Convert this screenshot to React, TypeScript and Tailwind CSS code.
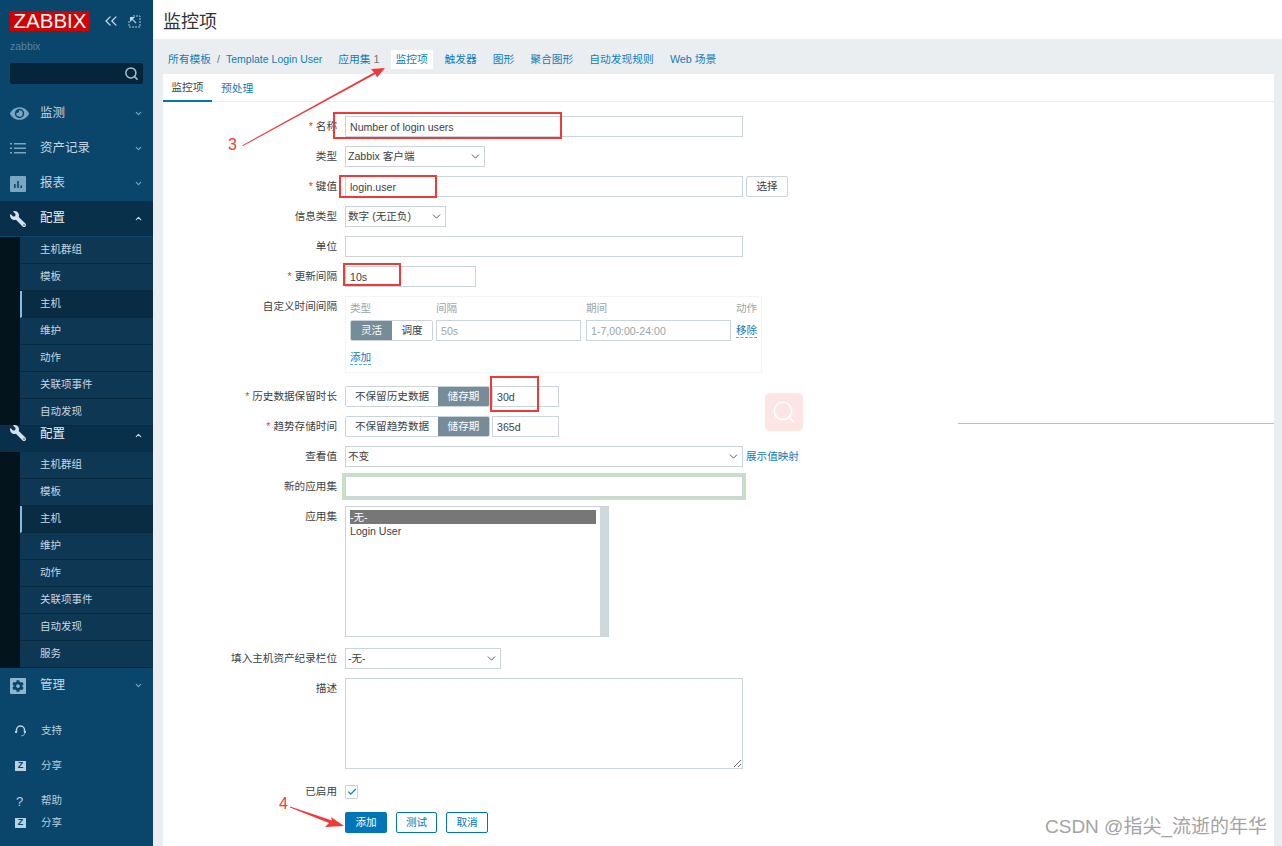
import { ReactNode } from "react";
import { ChevronDown, ChevronUp, ChevronsLeft, Check, Search } from "lucide-react";
import { FaEye, FaWrench, FaCog } from "react-icons/fa";

const FONT = "font-['Liberation_Sans','Noto_Sans_CJK_SC',sans-serif]";

function NavItem({
  icon,
  label,
  open,
  active,
}: {
  icon: ReactNode;
  label: string;
  open?: boolean;
  active?: boolean;
}) {
  return (
    <div
      className={`flex h-[35px] items-center pl-[10px] pr-[10px] ${active ? "bg-[#08304a] text-[#e6eef3]" : "text-[#c4d6e1]"}`}
    >
      <div className="flex w-[30px] items-center">{icon}</div>
      <span className="flex-1 text-[12.5px]">{label}</span>
      {open ? (
        <ChevronUp size={9} strokeWidth={3} className="text-[#c4d6e1]" />
      ) : (
        <ChevronDown size={9} strokeWidth={3} className="text-[#7ea6bf]" />
      )}
    </div>
  );
}

function SubMenu({ items, className }: { items: string[]; className?: string }) {
  return (
    <div className={`flex bg-[#03141d] ${className ?? ""}`}>
      <div className="w-[20px]" />
      <div className="flex-1">
        {items.map((item) => {
          const active = item === "主机";
          return (
            <div
              key={item}
              className={`flex h-[27px] items-center border-b border-[#072a40] text-[10.5px] text-[#c8d8e2] ${active ? "border-l-2 border-l-[#7dbfe8] bg-[#0a2c43] pl-[18px]" : "bg-[#0e3754] pl-[20px]"}`}
            >
              {item}
            </div>
          );
        })}
      </div>
    </div>
  );
}

function ZBadge() {
  return (
    <div className="flex h-[10px] w-[11px] items-center justify-center bg-[#b9d2e0] text-[9px] font-bold text-[#0a466b]">
      Z
    </div>
  );
}

function FootItem({ icon, label, className }: { icon: ReactNode; label: string; className: string }) {
  return (
    <div className={`flex items-center pl-[15px] text-[10.5px] text-[#b9cfdc] ${className}`}>
      <div className="flex w-[26px] items-center">{icon}</div>
      {label}
    </div>
  );
}

function Sidebar() {
  return (
    <aside className="flex w-[153px] flex-none flex-col bg-[#0a466b]">
      <div className="flex items-center pl-[10px] pt-[11px]">
        <div className="flex h-[20px] w-[80px] items-center justify-center bg-[#d40000] text-[20.5px] leading-none text-white">
          ZABBIX
        </div>
        <ChevronsLeft size={20} strokeWidth={1.5} className="ml-[11px] text-[#c9dbe6]" />
        <svg width="13" height="13" viewBox="0 0 13 13" fill="none" stroke="#a9c4d4" className="ml-[7px]">
          <path d="M5 1H12V12H1V5" strokeDasharray="2 1" />
          <path d="M2 2H7L2 7Z" fill="#c9dbe6" stroke="none" />
          <path d="M4 4L8 8" strokeWidth="1.3" />
        </svg>
      </div>
      <div className="mt-[8px] pl-[10px] text-[10.5px] leading-[14px] text-[#55859f]">zabbix</div>
      <div className="mx-[10px] mt-[10px] flex h-[21px] items-center justify-end rounded-[2px] border border-[#052235] bg-[#05263a] pr-[3px]">
        <Search size={15} strokeWidth={2.4} className="text-[#a9c1cf]" />
      </div>
      <nav className="mt-[12px]">
        <NavItem icon={<FaEye size={19} className="text-[#7aa6c0]" />} label="监测" />
        <NavItem
          icon={
            <svg width="17" height="11" viewBox="0 0 17 11" fill="#7aa6c0">
              <path d="M0 0h2v1.6H0zM4 0h12v1.6H4zM0 4.5h2v1.6H0zM4 4.5h12v1.6H4zM0 9h2v1.6H0zM4 9h12v1.6H4z" />
            </svg>
          }
          label="资产记录"
        />
        <NavItem
          icon={
            <svg width="16" height="16" viewBox="0 0 16 16">
              <rect width="16" height="16" rx="1" fill="#7aa6c0" />
              <path d="M4 8h1.6v4H4zM7.2 5h1.6v7H7.2zM10.4 9.5H12V12h-1.6z" fill="#0a466b" />
            </svg>
          }
          label="报表"
        />
        <NavItem
          icon={<FaWrench size={16} className="-scale-x-100 text-[#d3e2ec]" />}
          label="配置"
          open
          active
        />
        <SubMenu className="mt-[1px]" items={["主机群组", "模板", "主机", "维护", "动作", "关联项事件", "自动发现"]} />
        <div className="-mt-[1px] flex h-[27px] items-start overflow-hidden bg-[#08304a] pl-[10px] pr-[10px] text-[#e6eef3]">
          <div className="flex w-[30px] items-center">
            <FaWrench size={16} className="-scale-x-100 text-[#d3e2ec]" />
          </div>
          <span className="flex-1 text-[12.5px]">配置</span>
          <ChevronUp size={9} strokeWidth={3} className="mt-[6px] text-[#c4d6e1]" />
        </div>
        <SubMenu items={["主机群组", "模板", "主机", "维护", "动作", "关联项事件", "自动发现", "服务"]} />
        <NavItem
          icon={
            <div className="flex h-[16px] w-[16px] items-center justify-center rounded-[1px] bg-[#8fb6cd]">
              <FaCog size={12} className="text-[#0a466b]" />
            </div>
          }
          label="管理"
        />
      </nav>
      <div className="mt-[10px]">
        <FootItem
          className="h-[35px]"
          label="支持"
          icon={
            <svg width="11" height="12" viewBox="0 0 11 12" fill="none" stroke="#b9d2e0" strokeWidth="1.5">
              <path d="M1.5 7V5a4 4 0 018 0v2" />
              <path d="M1 6v2M10 6v2" strokeWidth="2" />
              <path d="M9.5 8.5c0 1.500-1.500 2.300-3 2.300" strokeWidth="1" />
            </svg>
          }
        />
        <FootItem className="h-[35px]" label="分享" icon={<ZBadge />} />
        <FootItem
          className="h-[22px] mt-[7px]"
          label="帮助"
          icon={<span className="pl-[1px] text-[13px] leading-none text-[#b9d2e0]">?</span>}
        />
        <FootItem className="h-[22px]" label="分享" icon={<ZBadge />} />
      </div>
    </aside>
  );
}

function Row({
  label,
  required,
  children,
  mb = "mb-[9px]",
  h = "h-[21px]",
}: {
  label: string;
  required?: boolean;
  children: ReactNode;
  mb?: string;
  h?: string;
}) {
  return (
    <div className={`flex items-start ${mb}`}>
      <div className={`flex w-[174px] flex-none items-center justify-end whitespace-nowrap text-[#3b4245] ${h}`}>
        {required && <span className="mr-[3px] text-[#e33734]">*</span>}
        {label}
      </div>
      <div className="ml-[8px] flex-1">{children}</div>
    </div>
  );
}

function Field({ value, w, placeholder }: { value?: string; w: string; placeholder?: string }) {
  return (
    <input
      readOnly
      value={value ?? ""}
      placeholder={placeholder}
      className={`block h-[21px] border border-[#cbd4d9] bg-white px-[4px] text-[#3b4245] outline-none placeholder:text-[#9aa5aa] ${w}`}
    />
  );
}

function Select({ value, w }: { value: string; w: string }) {
  return (
    <div className={`flex h-[21px] items-center justify-between border border-[#cbd4d9] bg-white pl-[2px] pr-[2px] text-[#3b4245] ${w}`}>
      <span>{value}</span>
      <ChevronDown size={13} strokeWidth={1.6} className="text-[#3b4245]" />
    </div>
  );
}

function Segmented({ left, right, leftW, rightW }: { left: string; right: string; leftW: string; rightW: string }) {
  return (
    <div className="flex h-[21px] overflow-hidden rounded-[2px] border border-[#cbd4d9]">
      <div className={`flex items-center justify-center bg-white text-[#3b4245] ${leftW}`}>{left}</div>
      <div className={`flex items-center justify-center bg-[#768d99] text-white ${rightW}`}>{right}</div>
    </div>
  );
}

function CustomIntervals() {
  return (
    <div className="h-[77px] w-[417px] border border-[#f2f4f5] pl-[4px] pt-[4px]">
      <div className="flex h-[15px] items-center text-[#9aa5aa]">
        <div className="w-[86px]">类型</div>
        <div className="w-[150px]">间隔</div>
        <div className="w-[150px]">期间</div>
        <div>动作</div>
      </div>
      <div className="mt-[4px] flex items-center">
        <div className="flex h-[21px] w-[83px] overflow-hidden rounded-[2px] border border-[#cbd4d9]">
          <div className="flex w-[41px] items-center justify-center bg-[#768d99] text-white">灵活</div>
          <div className="flex flex-1 items-center justify-center bg-white text-[#3b4245]">调度</div>
        </div>
        <div className="ml-[3px]">
          <Field w="w-[145px]" placeholder="50s" />
        </div>
        <div className="ml-[5px]">
          <Field w="w-[145px]" placeholder="1-7,00:00-24:00" />
        </div>
        <span className="ml-[5px] border-b border-dashed border-[#5fa8d4] leading-[13px] text-[#0f7cba]">移除</span>
      </div>
      <span className="mt-[10px] inline-block border-b border-dashed border-[#5fa8d4] leading-[13px] text-[#0f7cba]">添加</span>
    </div>
  );
}

function ItemForm() {
  return (
    <div className="pt-[14px] text-[10.6px]">
      <Row label="名称" required>
        <Field value="Number of login users" w="w-[398px]" />
      </Row>
      <Row label="类型">
        <Select value="Zabbix 客户端" w="w-[140px]" />
      </Row>
      <Row label="键值" required>
        <div className="flex items-center">
          <Field value="login.user" w="w-[398px]" />
          <div className="ml-[3px] flex h-[21px] w-[42px] items-center justify-center rounded-[2px] border border-[#cbd4d9] bg-white text-[#3b4245]">
            选择
          </div>
        </div>
      </Row>
      <Row label="信息类型">
        <Select value="数字 (无正负)" w="w-[101px]" />
      </Row>
      <Row label="单位">
        <Field w="w-[398px]" />
      </Row>
      <Row label="更新间隔" required>
        <Field value="10s" w="w-[131px]" />
      </Row>
      <Row label="自定义时间间隔" mb="mb-[13px]">
        <CustomIntervals />
      </Row>
      <Row label="历史数据保留时长" required>
        <div className="flex">
          <Segmented left="不保留历史数据" right="储存期" leftW="w-[92px]" rightW="w-[51px]" />
          <div className="ml-[2px]">
            <Field value="30d" w="w-[67px]" />
          </div>
        </div>
      </Row>
      <Row label="趋势存储时间" required>
        <div className="flex">
          <Segmented left="不保留趋势数据" right="储存期" leftW="w-[92px]" rightW="w-[51px]" />
          <div className="ml-[2px]">
            <Field value="365d" w="w-[67px]" />
          </div>
        </div>
      </Row>
      <Row label="查看值">
        <div className="flex items-center">
          <Select value="不变" w="w-[398px]" />
          <span className="ml-[3px] text-[#0f7cba]">展示值映射</span>
        </div>
      </Row>
      <Row label="新的应用集">
        <div className="w-[398px] shadow-[0_0_0_3px_#c6e0c4]">
          <Field w="w-[398px]" />
        </div>
      </Row>
      <Row label="应用集" mb="mb-[11px]">
        <div className="flex h-[131px] w-[264px] border border-[#cbd4d9] bg-white">
          <div className="flex-1 pl-[4px] pr-[4px] pt-[3px] leading-[14px]">
            <div className="bg-[#777777] text-white">-无-</div>
            <div className="text-[#3b4245]">Login User</div>
          </div>
          <div className="w-[8px] bg-[#cfd8dc]" />
        </div>
      </Row>
      <Row label="填入主机资产纪录栏位">
        <Select value="-无-" w="w-[156px]" />
      </Row>
      <Row label="描述" mb="mb-[16px]">
        <textarea readOnly className="block h-[91px] w-[398px] border border-[#cbd4d9] bg-white outline-none" />
      </Row>
      <Row label="已启用" mb="mb-[13px]" h="h-[14px]">
        <div className="flex h-[14px] w-[13px] items-center justify-center rounded-[1px] border border-[#cbd4d9] bg-white">
          <Check size={10} strokeWidth={3} className="text-[#0f7cba]" />
        </div>
      </Row>
      <div className="ml-[182px] flex">
        <button className="h-[21px] w-[42px] rounded-[2px] bg-[#0275b8] text-white">添加</button>
        <button className="ml-[9px] h-[21px] w-[41px] rounded-[2px] border border-[#0275b8] bg-white text-[#0275b8]">测试</button>
        <button className="ml-[9px] h-[21px] w-[42px] rounded-[2px] border border-[#0275b8] bg-white text-[#0275b8]">取消</button>
      </div>
    </div>
  );
}

function BreadcrumbTabs() {
  return (
    <div className="flex h-[35px] items-center pl-[5px] pt-[6px] text-[10.75px] text-[#0f7cba]">
      <span>所有模板</span>
      <span className="mx-[6px] text-[#6b7478]">/</span>
      <span className="text-[10.5px]">Template Login User</span>
      <span className="ml-[16px]">
        应用集 <span className="text-[#6b7478]">1</span>
      </span>
      <span className="ml-[11px] flex h-[19px] w-[42px] items-center justify-center bg-white">监控项</span>
      <span className="ml-[12px]">触发器</span>
      <span className="ml-[16px]">图形</span>
      <span className="ml-[16px]">聚合图形</span>
      <span className="ml-[16px]">自动发现规则</span>
      <span className="ml-[16px]">Web 场景</span>
    </div>
  );
}

// Red callouts drawn on top of the form
function Annotations() {
  return (
    <>
      <div className="absolute left-[333px] top-[112px] h-[27px] w-[229px] border-2 border-[#f03a3a]" />
      <div className="absolute left-[339px] top-[175px] h-[23px] w-[98px] border-2 border-[#f03a3a]" />
      <div className="absolute left-[343px] top-[263px] h-[23px] w-[58px] border-2 border-[#f03a3a]" />
      <div className="absolute left-[490px] top-[376px] h-[36px] w-[49px] border-2 border-[#f03a3a]" />
      <svg className="pointer-events-none absolute left-0 top-0" width="1282" height="846">
        <path d="M242 145.500L374 72.500L371 69L385 68L377 77.500L375.500 74L243 146Z" fill="#f03a3a" />
        <path d="M290 806.500L332 820.500L331 817L344 826L325 827L329 823L290 807.500Z" fill="#f03a3a" />
      </svg>
      <span className="absolute left-[228px] top-[136px] text-[16px] leading-[18px] text-[#f03a3a]">3</span>
      <span className="absolute left-[279px] top-[795px] text-[16px] leading-[18px] text-[#f03a3a]">4</span>
      <div className="absolute left-[765px] top-[393px] flex h-[38px] w-[38px] items-center justify-center rounded-[5px] bg-[#fde5e4]">
        <Search size={26} strokeWidth={1.6} className="text-white" />
      </div>
      <div className="absolute left-[958px] top-[423px] h-px w-[316px] bg-[#86ccf5]" />
      <span className="absolute left-[1045px] top-[816px] text-[19px] leading-[22px] text-[#a3a3a3]">
        CSDN @指尖_流逝的年华
      </span>
    </>
  );
}

export default function App() {
  return (
    <div className={`relative flex h-[846px] w-[1282px] overflow-hidden bg-[#ebeef0] ${FONT}`}>
      <Sidebar />
      <main className="flex min-w-0 flex-1 flex-col">
        <header className="flex h-[39px] flex-none items-center bg-white pl-[10px] pt-[5px] text-[18px] text-[#2f3437]">
          监控项
        </header>
        <div className="flex flex-1 flex-col pl-[10px] pr-[8px]">
          <BreadcrumbTabs />
          <section className="flex-1 bg-white">
            <div className="flex h-[28px] border-b border-[#ebeef0] text-[10.75px]">
              <div className="flex h-[28px] w-[49px] items-center justify-center border-b-2 border-[#0275b8] pt-[1px] text-[#3b4245]">
                监控项
              </div>
              <div className="ml-[9px] flex items-center pt-[1px] text-[#0f7cba]">预处理</div>
            </div>
            <ItemForm />
          </section>
        </div>
      </main>
      <Annotations />
    </div>
  );
}
